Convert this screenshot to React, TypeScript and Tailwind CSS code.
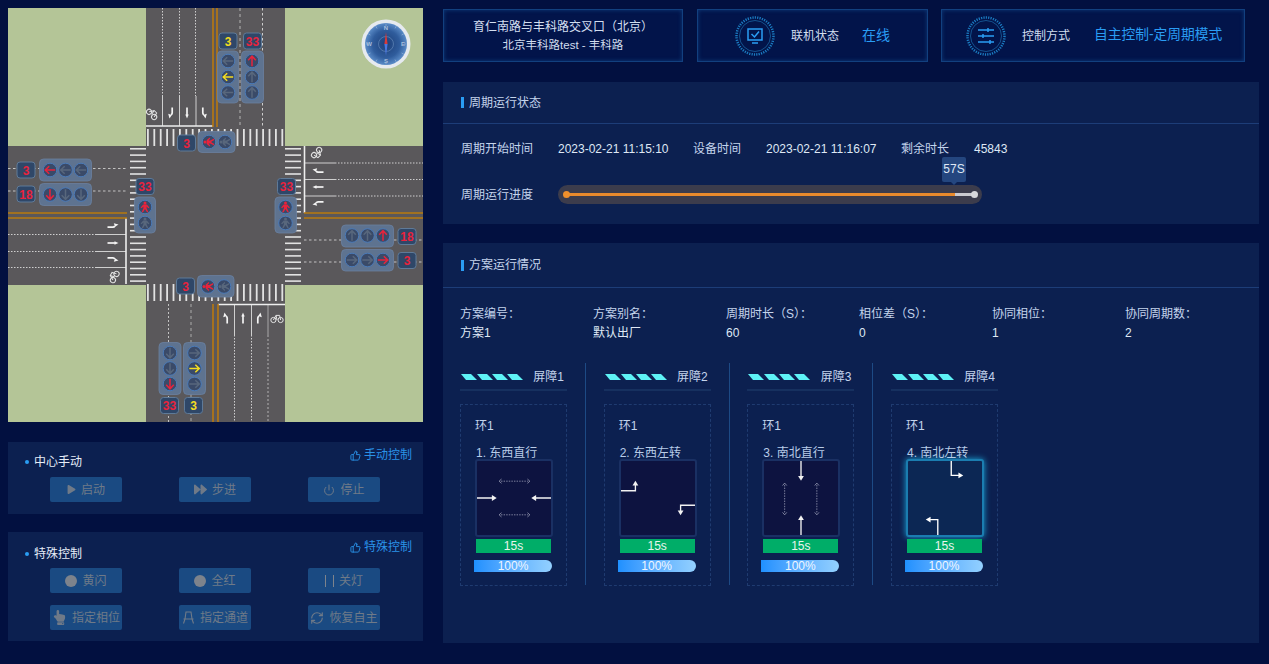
import { Power, RefreshCw, ThumbsUp } from "lucide-react";
import { FaForward, FaHandPointUp, FaPlay } from "react-icons/fa";
import type { ReactNode } from "react";

const RED = "#e8233c";
const YELLOW = "#f2dc22";
const OFF = "#58677c";

const range = (from: number, to: number, step: number) => {
  const out: number[] = [];
  for (let v = from; v <= to; v += step) out.push(v);
  return out;
};

// arrow lamp, rot is in degrees, 0 = points up
const Lamp = ({ cx, cy, rot, color = OFF }: { cx: number; cy: number; rot: number; color?: string }) => (
  <g transform={`translate(${cx} ${cy})`}>
    <circle r="6.8" fill="#3a4a68" stroke="#4a7ab8" strokeWidth="1" />
    <g transform={`rotate(${rot})`} fill="none" stroke={color} strokeWidth="1.5">
      <path d="M0 5.200V-4.400M-3.800-.8L0-4.800L3.800-.8" />
    </g>
  </g>
);

const Walker = ({ cx, cy, rot, color = OFF }: { cx: number; cy: number; rot: number; color?: string }) => (
  <g transform={`translate(${cx} ${cy})`}>
    <circle r="6.8" fill="#3a4a68" stroke="#4a7ab8" strokeWidth="1" />
    <g transform={`rotate(${rot})`} fill={color}>
      <circle cy="-4" r="1.5" />
      <path d="M-1.8-2.4H1.8L4.4 .6L3.4 1.2L1.6-.4V1.2L3.4 5.2H2L0 2L-2 5.2H-3.4L-1.6 1.2V-.4L-3.4 1.2L-4.4 .6Z" />
    </g>
  </g>
);

const Plate = ({ x, y, w, h }: { x: number; y: number; w: number; h: number }) => (
  <rect x={x} y={y} width={w} height={h} rx="4" fill="#5e7390" stroke="#6a80a0" strokeWidth="0.8" />
);

const Counter = ({ x, y, text, color = RED }: { x: number; y: number; text: string; color?: string }) => (
  <g>
    <rect x={x} y={y} width="18" height="16" rx="3" fill="#2f4768" stroke="#5f7a98" strokeWidth="1" />
    <text
      x={x + 9}
      y={y + 12.5}
      textAnchor="middle"
      fill={color}
      fontSize="12"
      fontWeight="700"
      fontFamily="Liberation Sans, sans-serif"
    >
      {text}
    </text>
  </g>
);

const Bike = ({ x, y, rot }: { x: number; y: number; rot: number }) => (
  <g transform={`translate(${x} ${y}) rotate(${rot})`} fill="none" stroke="#e4e4e4" strokeWidth="1">
    <circle cx="-3.600" cy="2" r="2.600" />
    <circle cx="3.600" cy="2" r="2.600" />
    <path d="M-3.600 2L-1-2.600H2.600L3.600 2M-1-2.600L0 2" />
  </g>
);

// lane marking, drawn pointing up
const LaneArrow = ({ x, y, rot, kind }: { x: number; y: number; rot: number; kind: "s" | "l" | "r" }) => (
  <g transform={`translate(${x} ${y}) rotate(${rot})`} fill="none" stroke="#f4f4f4" strokeWidth="1.700">
    {kind === "s" && <path d="M0 5.500V-2" />}
    {kind === "l" && <path d="M1.200 5.500V0Q1.200-1.200 0-1.800" />}
    {kind === "r" && <path d="M-1.200 5.500V0Q-1.200-1.200 0-1.800" />}
    {kind === "s" && <path d="M-1.700-1.500H1.700L0-5.500Z" fill="#f4f4f4" stroke="none" />}
    {kind === "l" && <path d="M-2.800-.8L-1.500-5.500L.8-2Z" fill="#f4f4f4" stroke="none" />}
    {kind === "r" && <path d="M2.800-.8L1.500-5.500L-.8-2Z" fill="#f4f4f4" stroke="none" />}
  </g>
);

const Compass = () => (
  <g transform="translate(386 44)">
    <defs>
      <radialGradient id="dial">
        <stop offset="0%" stopColor="#1d3f78" />
        <stop offset="65%" stopColor="#2f5c9c" />
        <stop offset="100%" stopColor="#5b8cc8" />
      </radialGradient>
    </defs>
    <circle r="24.500" fill="#e6eaef" />
    <circle r="21" fill="url(#dial)" />
    <circle r="7.500" fill="none" stroke="#6c90bf" strokeWidth="0.6" />
    {range(0, 330, 30).map((a) => (
      <path key={a} d="M0-20.500V-18" stroke="#a8c0de" strokeWidth="0.5" transform={`rotate(${a})`} />
    ))}
    <path d="M0-12L1.600 0H-1.600Z" fill="#d83a3a" />
    <path d="M0 12L1.600 0H-1.600Z" fill="#4a78e0" />
    {[
      ["N", 0, -14],
      ["S", 0, 19],
      ["E", 17, 2],
      ["W", -17, 2],
    ].map(([t, dx, dy]) => (
      <text
        key={t as string}
        x={dx as number}
        y={dy as number}
        textAnchor="middle"
        fontSize="6"
        fontWeight="700"
        fill="#a9bedc"
        fontFamily="Liberation Sans, sans-serif"
      >
        {t}
      </text>
    ))}
  </g>
);

const IntersectionMap = () => (
  <svg width="415" height="414" viewBox="8 8 415 414" className="block">
    <rect x="8" y="8" width="415" height="414" fill="#b4c597" />
    <rect x="146" y="8" width="139" height="414" fill="#5a585b" />
    <rect x="8" y="146" width="415" height="139" fill="#5a585b" />

    {/* crosswalks */}
    {range(147, 283, 6.4).map((x) => (
      <g key={x}>
        <rect x={x} y="129" width="1.800" height="17" fill="#e2e2e2" />
        <rect x={x} y="284" width="1.800" height="17" fill="#e2e2e2" />
      </g>
    ))}
    {range(148, 284, 6.3).map((y) => (
      <g key={y}>
        <rect x="130" y={y} width="16" height="1.600" fill="#e2e2e2" />
        <rect x="285" y={y} width="16" height="1.600" fill="#e2e2e2" />
      </g>
    ))}

    {/* north road */}
    <g fill="none" strokeWidth="0.8">
      <path d="M162.500 8V96M179.500 8V96M195.500 8V96" stroke="#eee" strokeDasharray="1.500 1.500" />
      <path d="M162.500 96V126M179.500 96V126M196 96V126" stroke="#eee" />
      <path d="M240 8V126" stroke="#b5b5b5" strokeDasharray="3 3" strokeWidth="1" />
      <path d="M262.500 8V126" stroke="#eee" strokeDasharray="2.500 2.500" />
      <path d="M146 126H213" stroke="#eee" strokeWidth="1.600" />
      <path d="M213 8V127M217 8V127" stroke="#b8790f" strokeWidth="1.600" />
    </g>
    {/* south road */}
    <g fill="none" strokeWidth="0.8">
      <path d="M234.500 335V422M251.500 335V422" stroke="#eee" strokeDasharray="1.500 1.500" />
      <path d="M268 335V422" stroke="#c8c8c8" strokeDasharray="2 2" />
      <path d="M234.500 304V335M251.500 304V335" stroke="#eee" />
      <path d="M268 304V335" stroke="#bbb" />
      <path d="M218 304.500H285" stroke="#eee" strokeWidth="1.600" />
      <path d="M168.500 304V422" stroke="#ddd" strokeDasharray="2 2" />
      <path d="M191 304V422" stroke="#aaa" strokeDasharray="3 3" strokeWidth="1" />
      <path d="M213 304V422M218 304V422" stroke="#b8790f" strokeWidth="1.600" />
    </g>
    {/* west road */}
    <g fill="none" strokeWidth="0.8">
      <path d="M8 168.500H127M8 191H127" stroke="#ddd" strokeDasharray="2.500 2.500" />
      <path d="M8 234.500H96M8 251.500H96M8 267.500H96" stroke="#eee" strokeDasharray="1.500 1.500" />
      <path d="M96 234.500H126M96 251.500H126M96 267.500H126" stroke="#eee" />
      <path d="M126 218V284" stroke="#eee" strokeWidth="1.600" />
      <path d="M8 213H127M8 218H127" stroke="#b8790f" strokeWidth="1.600" />
    </g>
    {/* east road */}
    <g fill="none" strokeWidth="0.8">
      <path d="M335 163H423M335 179.500H423M335 196H423" stroke="#eee" strokeDasharray="1.500 1.500" />
      <path d="M305 163H335M305 179.500H335M305 196H335" stroke="#eee" />
      <path d="M304.500 146V213" stroke="#eee" strokeWidth="1.600" />
      <path d="M304 240H423M304 262H423" stroke="#ddd" strokeDasharray="2.500 2.500" />
      <path d="M304 213H423M304 218H423" stroke="#b8790f" strokeWidth="1.600" />
    </g>

    {/* lane markings */}
    <Bike x={153} y={113} rot={45} />
    <LaneArrow x={171} y={113} rot={180} kind="r" />
    <LaneArrow x={187} y={113} rot={180} kind="s" />
    <LaneArrow x={204} y={113} rot={180} kind="l" />
    <Bike x={318} y={154} rot={135} />
    <LaneArrow x={318} y={171} rot={-90} kind="r" />
    <LaneArrow x={318} y={187} rot={-90} kind="s" />
    <LaneArrow x={318} y={203} rot={-90} kind="l" />
    <Bike x={113} y={276} rot={-60} />
    <LaneArrow x={113} y={226} rot={90} kind="l" />
    <LaneArrow x={113} y={243} rot={90} kind="s" />
    <LaneArrow x={113} y={259} rot={90} kind="r" />
    <Bike x={277} y={318} rot={0} />
    <LaneArrow x={226} y={318} rot={0} kind="l" />
    <LaneArrow x={243} y={318} rot={0} kind="s" />
    <LaneArrow x={259} y={318} rot={0} kind="r" />

    {/* north signals */}
    <Counter x={219} y={33} text="3" color={YELLOW} />
    <Counter x={243.500} y={33} text="33" />
    <Plate x={217.500} y={51} w={21} h={52} />
    <Plate x={241.500} y={51} w={22} h={52} />
    <Lamp cx={228} cy={61} rot={-90} />
    <Lamp cx={228} cy={77} rot={-90} color={YELLOW} />
    <Lamp cx={228} cy={92.500} rot={-90} />
    <Lamp cx={252} cy={61} rot={0} color={RED} />
    <Lamp cx={252} cy={77} rot={0} />
    <Lamp cx={252} cy={92.500} rot={0} />

    {/* north ped */}
    <Counter x={177.500} y={135} text="3" />
    <Plate x={198} y={131.500} w={37} h={21} />
    <Walker cx={209} cy={142} rot={-90} color={RED} />
    <Walker cx={225} cy={142} rot={-90} />

    {/* west signals */}
    <Counter x={17} y={162} text="3" />
    <Plate x={39.500} y={159} w={52} h={22} />
    <Lamp cx={50} cy={170} rot={-90} color={RED} />
    <Lamp cx={65.500} cy={170} rot={-90} />
    <Lamp cx={81} cy={170} rot={-90} />
    <Counter x={17} y={186} text="18" />
    <Plate x={39.500} y={183.500} w={52} h={22} />
    <Lamp cx={50} cy={194.500} rot={180} color={RED} />
    <Lamp cx={65.500} cy={194.500} rot={180} />
    <Lamp cx={81} cy={194.500} rot={180} />

    {/* west / east ped */}
    <Counter x={136} y={178.500} text="33" />
    <Plate x={134.500} y={197} w={21} h={36} />
    <Walker cx={145} cy={207} rot={0} color={RED} />
    <Walker cx={145} cy={223} rot={0} />
    <Counter x={277.500} y={178.500} text="33" />
    <Plate x={275} y={197} w={21.500} h={36} />
    <Walker cx={285.500} cy={207} rot={0} color={RED} />
    <Walker cx={285.500} cy={223} rot={0} />

    {/* east signals */}
    <Plate x={341.500} y={225} w={52} h={22} />
    <Lamp cx={352} cy={235.500} rot={0} />
    <Lamp cx={367.500} cy={235.500} rot={0} />
    <Lamp cx={383} cy={235.500} rot={0} color={RED} />
    <Counter x={398} y={228.500} text="18" />
    <Plate x={341.500} y={249.500} w={52} h={21.500} />
    <Lamp cx={352} cy={260} rot={90} />
    <Lamp cx={367.500} cy={260} rot={90} />
    <Lamp cx={383} cy={260} rot={90} color={RED} />
    <Counter x={398} y={252.500} text="3" />

    {/* south ped */}
    <Counter x={176.500} y={278} text="3" />
    <Plate x={197.500} y={275.500} w={36.500} h={21.500} />
    <Walker cx={208} cy={286.500} rot={-90} color={RED} />
    <Walker cx={224} cy={286.500} rot={-90} />

    {/* south signals */}
    <Plate x={159} y={342.500} w={22} h={52} />
    <Plate x={183.500} y={342.500} w={22} h={52} />
    <Lamp cx={170} cy={353} rot={180} />
    <Lamp cx={170} cy={368.500} rot={180} />
    <Lamp cx={170} cy={384} rot={180} color={RED} />
    <Lamp cx={194.500} cy={353} rot={90} />
    <Lamp cx={194.500} cy={368.500} rot={90} color={YELLOW} />
    <Lamp cx={194.500} cy={384} rot={90} />
    <Counter x={160.500} y={397.500} text="33" />
    <Counter x={184.500} y={397.500} text="3" color={YELLOW} />

    <Compass />
  </svg>
);

const ControlButton = ({ icon, label }: { icon: ReactNode; label: string }) => (
  <div className="w-[72px] h-[25px] rounded-[2px] bg-[#1a4a82] flex items-center justify-center gap-[5px] text-[12px] text-[#6f7a88]">
    {icon}
    <span className="whitespace-nowrap">{label}</span>
  </div>
);

const ControlLink = ({ label }: { label: string }) => (
  <div className="flex items-center gap-[3px] text-[12px] text-[#2a92e8]">
    <ThumbsUp size={11} />
    <span>{label}</span>
  </div>
);

const ControlTitle = ({ label }: { label: string }) => (
  <div className="flex items-center gap-[5px] text-[12px] text-[#e6edf8]">
    <span className="w-[4px] h-[4px] rounded-full bg-[#2a9df4]" />
    <span>{label}</span>
  </div>
);

const BenchIcon = () => (
  <svg width="13" height="13" viewBox="0 0 13 13" fill="none" stroke="#6f7a88" strokeWidth="1.100">
    <path d="M4 1H9L10 8H3ZM1.500 8H11.500M3 8L1.500 12.500M10 8L11.500 12.500" />
  </svg>
);

const RingIcon = ({ children }: { children: ReactNode }) => (
  <svg width="40" height="40" viewBox="0 0 40 40" fill="none">
    <circle cx="20" cy="20" r="18.500" stroke="#1b7cc2" strokeWidth="2.500" strokeDasharray="1.200 1.200" />
    <circle cx="20" cy="20" r="15.500" stroke="#14528f" strokeWidth="1" />
    {children}
  </svg>
);

const InfoItem = ({ label, value }: { label: string; value: string }) => (
  <div className="w-[133px] leading-[19px]">
    <div className="text-[#c4d4ec]">{label}</div>
    <div className="text-[#dfe8f5]">{value}</div>
  </div>
);

const Head = ({ x, y, rot }: { x: number; y: number; rot: number }) => (
  <path d="M0-3.500L3 1.500H-3Z" transform={`translate(${x} ${y}) rotate(${rot})`} fill="currentColor" />
);

const Ghost = ({ d, heads }: { d: string; heads: [number, number, number][] }) => (
  <g stroke="#b5b8cc" fill="none" strokeWidth="0.700">
    <path d={d} strokeDasharray="1.500 1.200" />
    {heads.map(([x, y, r]) => (
      <path key={`${x}-${y}`} d="M-2.200 1.500L0-1L2.200 1.500" transform={`translate(${x} ${y}) rotate(${r})`} />
    ))}
  </g>
);

const phaseDrawings: ReactNode[] = [
  <g key="1">
    <Ghost d="M25 21H53" heads={[[24, 21, -90], [54, 21, 90]]} />
    <Ghost d="M25 56H53" heads={[[24, 56, -90], [54, 56, 90]]} />
    <path d="M0 38.500H16M77 38.500H61" stroke="currentColor" strokeWidth="1.400" fill="none" />
    <Head x={17} y={38.500} rot={90} />
    <Head x={60} y={38.500} rot={-90} />
  </g>,
  <g key="2">
    <path d="M0 31H15V25M77 46H62V52" stroke="currentColor" strokeWidth="1.400" fill="none" />
    <Head x={15} y={24} rot={0} />
    <Head x={62} y={53} rot={180} />
  </g>,
  <g key="3">
    <Ghost d="M21.500 25V54" heads={[[21.500, 24, 0], [21.500, 55, 180]]} />
    <Ghost d="M55 25V54" heads={[[55, 24, 0], [55, 55, 180]]} />
    <path d="M38.500 0V16M38.500 77V61" stroke="currentColor" strokeWidth="1.400" fill="none" />
    <Head x={38.500} y={17} rot={180} />
    <Head x={38.500} y={60} rot={0} />
  </g>,
  <g key="4">
    <path d="M45 0V15H53M31 77V61H23" stroke="currentColor" strokeWidth="1.400" fill="none" />
    <Head x={54} y={15} rot={90} />
    <Head x={22} y={61} rot={-90} />
  </g>,
];

const stages = [
  { barrier: "屏障1", name: "1. 东西直行" },
  { barrier: "屏障2", name: "2. 东西左转" },
  { barrier: "屏障3", name: "3. 南北直行" },
  { barrier: "屏障4", name: "4. 南北左转" },
];

const StageColumn = ({ index }: { index: number }) => {
  const stage = stages[index];
  const active = index === 3;
  return (
    <div className="w-[107px]">
      <div className="h-[28px] border-b-2 border-[#16305f] flex items-center justify-between pl-[1px] pr-[3px] pt-[2px]">
        <svg width="62" height="6" viewBox="0 0 62 6">
          {[0, 16, 31, 46].map((x) => (
            <path key={x} d={`M${x} 0H${x + 10}L${x + 16} 6H${x + 5}Z`} fill="#5ef2f6" />
          ))}
        </svg>
        <span className="text-[12px] text-[#c4d4ec]">{stage.barrier}</span>
      </div>
      <div className="mt-[13px] h-[182px] border border-dashed border-[#1f3b70] pl-[14px] pt-[13px]">
        <div className="text-[12px] leading-[16px] text-[#c4d4ec]">环1</div>
        <div className="mt-[12px] pl-[1px] text-[12px] leading-[14px] text-[#b8cce8] whitespace-nowrap">{stage.name}</div>
        <div
          className={
            active
              ? "-mt-[1px] w-[78px] h-[78px] rounded-[3px] border-2 border-[#1b7db0] bg-[#0c2754] shadow-[0_0_6px_#1aa5d8] text-white"
              : "-mt-[1px] w-[78px] h-[78px] rounded-[3px] border-2 border-[#1a3063] bg-[#0d1340] text-[#f2f2f2]"
          }
        >
          <svg width="74" height="74" viewBox="0 0 77 77" className="block">
            {phaseDrawings[index]}
          </svg>
        </div>
        <div className="mt-[2px] ml-[1px] w-[75px] h-[14px] bg-[#00ad68] text-center text-[12px] leading-[14px] text-[#e8f5ee]">15s</div>
        <div className="mt-[7px] -ml-[1px] w-[78px] h-[12px] rounded-r-[6px] bg-gradient-to-r from-[#1e90ff] to-[#93d0ff] text-center text-[12px] leading-[12px] text-[#eef6ff]">
          100%
        </div>
      </div>
    </div>
  );
};

const SectionHeader = ({ title, h }: { title: string; h: string }) => (
  <div className={`${h} border-b border-[#1d3d78] flex items-center pl-[18px] text-[12px] text-[#c4d4ec]`}>
    <span className="w-[3px] h-[11px] bg-[#2a9df4] mr-[5px]" />
    {title}
  </div>
);

const topCard = "h-[53px] border border-[#12407f] bg-[#02144a] shadow-[inset_0_0_4px_#0d3a7a]";

export default function App() {
  return (
    <div className="w-[1269px] h-[664px] overflow-hidden bg-[#021040] flex pl-[8px] pt-[8px] font-['Liberation_Sans','Noto_Sans_CJK_SC',sans-serif]">
      {/* left column */}
      <div className="w-[415px] shrink-0">
        <IntersectionMap />

        <div className="mt-[20px] h-[72px] bg-[#0c2050] pl-[17px] pr-[11px]">
          <div className="h-[35px] flex justify-between items-start pt-[4px]">
            <div className="pt-[7px]">
              <ControlTitle label="中心手动" />
            </div>
            <ControlLink label="手动控制" />
          </div>
          <div className="flex gap-[57px] pl-[25px]">
            <ControlButton icon={<FaPlay size={9} />} label="启动" />
            <ControlButton icon={<FaForward size={13} />} label="步进" />
            <ControlButton icon={<Power size={12} />} label="停止" />
          </div>
        </div>

        <div className="mt-[18px] h-[109px] bg-[#0c2050] pl-[17px] pr-[11px]">
          <div className="h-[36px] flex justify-between items-start pt-[6px]">
            <div className="pt-[7px]">
              <ControlTitle label="特殊控制" />
            </div>
            <ControlLink label="特殊控制" />
          </div>
          <div className="flex gap-[57px] pl-[25px]">
            <ControlButton icon={<span className="w-[12px] h-[12px] rounded-full bg-[#7d838c]" />} label="黄闪" />
            <ControlButton icon={<span className="w-[12px] h-[12px] rounded-full bg-[#7d838c]" />} label="全红" />
            <ControlButton icon={<span className="w-[9px] h-[12px] border-x border-[#7d838c]" />} label="关灯" />
          </div>
          <div className="mt-[12px] flex gap-[57px] pl-[25px]">
            <ControlButton icon={<FaHandPointUp size={15} />} label="指定相位" />
            <ControlButton icon={<BenchIcon />} label="指定通道" />
            <ControlButton icon={<RefreshCw size={14} />} label="恢复自主" />
          </div>
        </div>
      </div>

      {/* right column */}
      <div className="ml-[20px] w-[816px] shrink-0 pt-[1px]">
        <div className="flex">
          <div className={`w-[240px] ${topCard} flex flex-col items-center justify-center text-[#d2deef]`}>
            <div className="text-[12px] leading-[18px]">育仁南路与丰科路交叉口（北京）</div>
            <div className="text-[11.500px] leading-[18px]">北京丰科路test - 丰科路</div>
          </div>
          <div className={`ml-[14px] w-[231px] ${topCard} flex items-center pl-[37px]`}>
            <RingIcon>
              <path d="M13 13H27V24H13ZM17 27H23" stroke="#2a9df4" strokeWidth="1.500" />
              <path d="M16.500 18L19.500 21L24 15.500" stroke="#2a9df4" strokeWidth="1.500" />
            </RingIcon>
            <span className="ml-[16px] text-[12px] text-[#d2deef]">联机状态</span>
            <span className="ml-[23px] text-[14px] text-[#2a9df4]">在线</span>
          </div>
          <div className={`ml-[13px] w-[304px] ${topCard} flex items-center pl-[24px]`}>
            <RingIcon>
              <path d="M12 14H28M12 20H28M12 26H28" stroke="#2a9df4" strokeWidth="1.500" />
              <path d="M22 12V16M17 18V22M24 24V28" stroke="#2a9df4" strokeWidth="1.500" />
            </RingIcon>
            <span className="ml-[16px] text-[12px] text-[#d2deef]">控制方式</span>
            <span className="ml-[24px] text-[13.750px] text-[#2a9df4] whitespace-nowrap">自主控制-定周期模式</span>
          </div>
        </div>

        <div className="mt-[20px] h-[142px] bg-[#0c2050]">
          <SectionHeader title="周期运行状态" h="h-[42px]" />
          <div className="pl-[18px] pt-[16px] h-[18px] box-content flex items-center text-[12px] text-[#dfe8f5] leading-[18px]">
            <span className="w-[97px] text-[#c4d4ec]">周期开始时间</span>
            <span className="w-[135px]">2023-02-21 11:15:10</span>
            <span className="w-[73px] text-[#c4d4ec]">设备时间</span>
            <span className="w-[135px]">2023-02-21 11:16:07</span>
            <span className="w-[73px] text-[#c4d4ec]">剩余时长</span>
            <span>45843</span>
          </div>
          <div className="mt-[27px] pl-[18px] flex items-center text-[12px] text-[#c4d4ec]">
            <span className="w-[97px]">周期运行进度</span>
            <div className="relative w-[424px] h-[19px] rounded-full bg-[#3c3c4c] flex items-center">
              <div className="ml-[8px] w-[389px] h-[3px] bg-[#e98a2c]" />
              <div className="w-[19px] h-[3px] bg-[#c9c9cf]" />
              <span className="absolute left-[5px] top-[6px] w-[7px] h-[7px] rounded-full bg-[#f0902c]" />
              <span className="absolute left-[413px] top-[6px] w-[7px] h-[7px] rounded-full bg-[#d8d8dc]" />
              <div className="absolute left-[384px] -top-[28px] w-[24px] h-[25px] rounded-[2px] bg-[#24467f] text-center text-[12px] leading-[25px] text-[#dfe8f5]">
                57S
                <span className="absolute left-[9px] -bottom-[3px] w-0 h-0 border-x-[3px] border-x-transparent border-t-[3px] border-t-[#24467f]" />
              </div>
            </div>
          </div>
        </div>

        <div className="mt-[19px] h-[400px] bg-[#0c2050]">
          <SectionHeader title="方案运行情况" h="h-[45px]" />
          <div className="pl-[17px] pt-[17px] flex text-[12px]">
            <InfoItem label="方案编号：" value="方案1" />
            <InfoItem label="方案别名：" value="默认出厂" />
            <InfoItem label="周期时长（S）：" value="60" />
            <InfoItem label="相位差（S）：" value="0" />
            <InfoItem label="协同相位：" value="1" />
            <InfoItem label="协同周期数：" value="2" />
          </div>
          <div className="pl-[17px] mt-[20px] flex">
            {stages.map((s, i) => (
              <div key={s.barrier} className="flex">
                <StageColumn index={i} />
                {i < 3 && <div className="ml-[18px] mr-[17.670px] w-[1px] h-[222px] bg-[#1d4a85]" />}
              </div>
            ))}
          </div>
        </div>
      </div>
    </div>
  );
}
